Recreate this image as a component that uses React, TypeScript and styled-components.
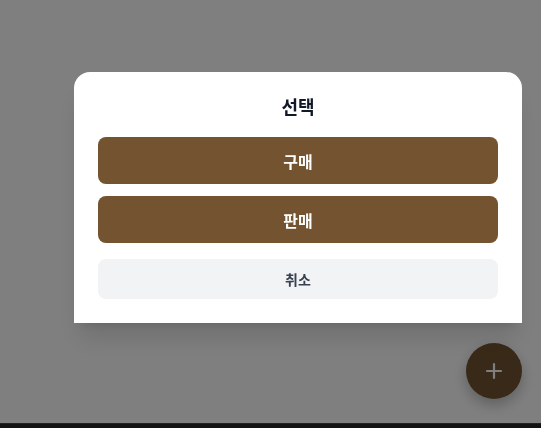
import React from "react";
import styled, { createGlobalStyle } from "styled-components";

const Global = createGlobalStyle`
  html, body { margin: 0; padding: 0; background: #ffffff; }
  body { font-family: "Noto Sans CJK KR", "Noto Sans", sans-serif; overflow: hidden; }
  * { box-sizing: border-box; }
`;

const Page = styled.div`
  position: relative;
  width: 541px;
  height: 428px;
  background: #ffffff;
  display: flex;
  flex-direction: column;
  justify-content: flex-end;
`;

const Fab = styled.button`
  position: absolute;
  right: 19px;
  bottom: 29px;
  width: 56px;
  height: 56px;
  border-radius: 50%;
  border: none;
  background: #735330;
  color: #ffffff;
  display: flex;
  align-items: center;
  justify-content: center;
  box-shadow: 0 6px 14px rgba(0, 0, 0, 0.25);
  padding: 0;
`;

const BottomBar = styled.div`
  height: 5px;
  background: #242424;
  border-top: 1px solid #444444;
`;

const Overlay = styled.div`
  position: fixed;
  inset: 0;
  background: rgba(0, 0, 0, 0.5);
  display: flex;
  justify-content: flex-end;
  align-items: flex-start;
  padding: 72px 19px 0 0;
`;

const Sheet = styled.div`
  width: 448px;
  background: #ffffff;
  border-radius: 16px 16px 0 0;
  padding: 20px 24px 24px;
  display: flex;
  flex-direction: column;
  box-shadow: 0 20px 25px -5px rgba(0, 0, 0, 0.12), 0 8px 10px -6px rgba(0, 0, 0, 0.1);
`;

const Title = styled.h2`
  margin: 0 0 17px;
  font-size: 18px;
  line-height: 28px;
  font-weight: 700;
  color: #111827;
  text-align: center;
`;

const Actions = styled.div`
  display: flex;
  flex-direction: column;
  gap: 12px;
`;

const PrimaryButton = styled.button`
  height: 47px;
  border: none;
  border-radius: 8px;
  background: #735330;
  color: #ffffff;
  font-family: inherit;
  font-size: 16px;
  font-weight: 700;
`;

const CancelButton = styled.button`
  margin-top: 16px;
  height: 40px;
  border: none;
  border-radius: 8px;
  background: #f2f3f5;
  color: #374151;
  font-family: inherit;
  font-size: 14px;
  font-weight: 600;
`;

export default function App() {
  return (
    <>
      <Global />
      <Page>
        <Fab aria-label="추가">
          <svg width="20" height="20" viewBox="0 0 20 20" fill="none" stroke="currentColor" strokeWidth="2.2" strokeLinecap="round">
            <path d="M10 3v14M3 10h14" />
          </svg>
        </Fab>
        <BottomBar />
      </Page>
      <Overlay>
        <Sheet>
          <Title>선택</Title>
          <Actions>
            <PrimaryButton>구매</PrimaryButton>
            <PrimaryButton>판매</PrimaryButton>
          </Actions>
          <CancelButton>취소</CancelButton>
        </Sheet>
      </Overlay>
    </>
  );
}
